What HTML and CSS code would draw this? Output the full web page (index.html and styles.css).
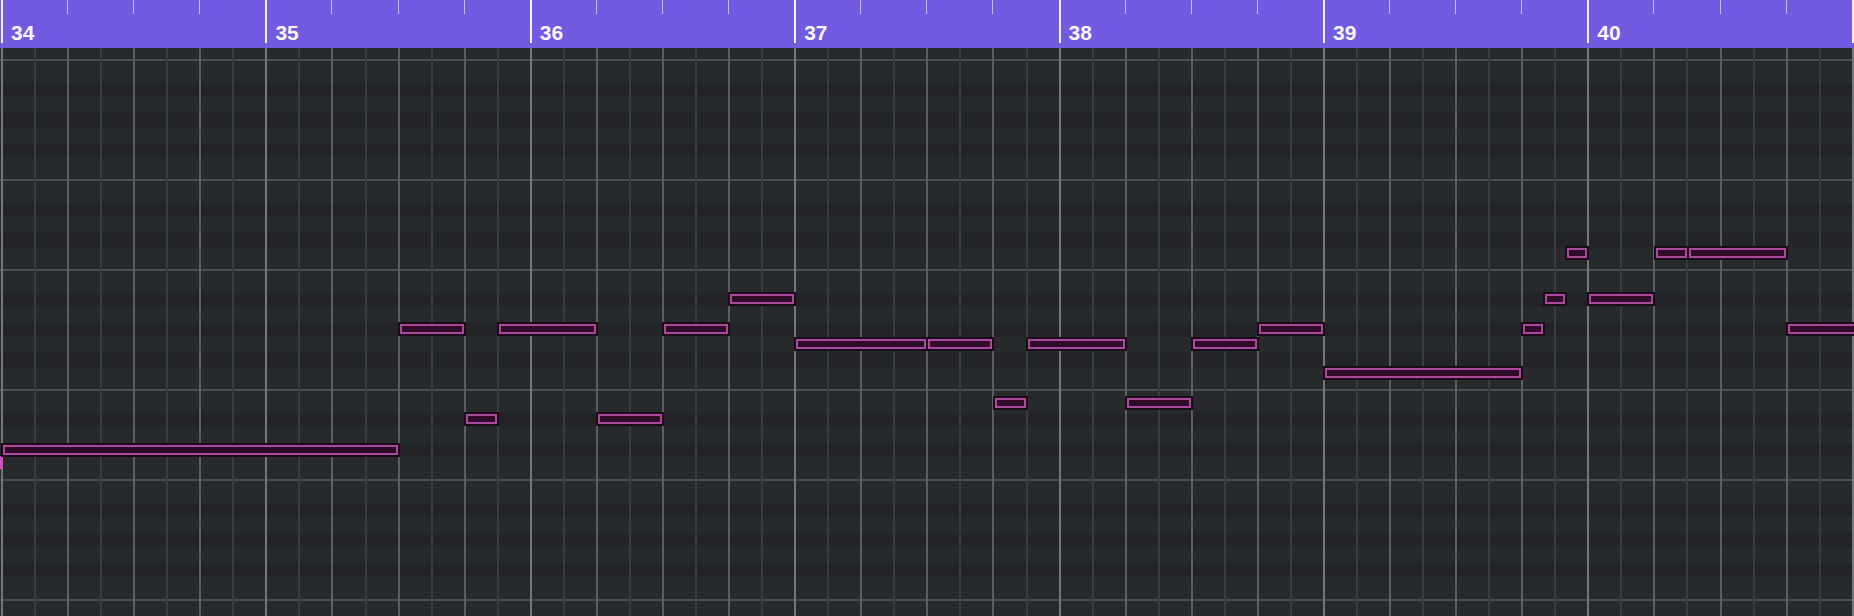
FILE: index.html
```html
<!DOCTYPE html>
<html lang="en">
<head>
  <meta charset="UTF-8" />
  <title>Piano Roll</title>
  <link rel="stylesheet" href="styles.css">
</head>
<body>

<div class="editor">
  <div class="ruler">
    <div class="bar"><div class="ticks"><i></i><i></i><i></i><i></i></div><span class="num">34</span></div>
    <div class="bar"><div class="ticks"><i></i><i></i><i></i><i></i></div><span class="num">35</span></div>
    <div class="bar"><div class="ticks"><i></i><i></i><i></i><i></i></div><span class="num">36</span></div>
    <div class="bar"><div class="ticks"><i></i><i></i><i></i><i></i></div><span class="num">37</span></div>
    <div class="bar"><div class="ticks"><i></i><i></i><i></i><i></i></div><span class="num">38</span></div>
    <div class="bar"><div class="ticks"><i></i><i></i><i></i><i></i></div><span class="num">39</span></div>
    <div class="bar"><div class="ticks"><i></i><i></i><i></i><i></i></div><span class="num">40</span></div>
    <div class="bar"><div class="ticks"><i></i><i></i><i></i><i></i></div></div>
  </div>

  <div class="roll">
    <div class="lanes">
      <div class="col"><i></i><i></i><i></i><i></i><i></i><i></i><i></i><i></i></div>
      <div class="col"><i></i><i></i><i></i><i></i><i></i><i></i><i></i><i></i></div>
      <div class="col"><i></i><i></i><i></i><i></i><i></i><i></i><i></i><i></i></div>
      <div class="col"><i></i><i></i><i></i><i></i><i></i><i></i><i></i><i></i></div>
      <div class="col"><i></i><i></i><i></i><i></i><i></i><i></i><i></i><i></i></div>
      <div class="col"><i></i><i></i><i></i><i></i><i></i><i></i><i></i><i></i></div>
      <div class="col"><i></i><i></i><i></i><i></i><i></i><i></i><i></i><i></i></div>
      <div class="col"><i></i><i></i><i></i><i></i><i></i><i></i><i></i><i></i></div>
    </div>

    <div class="notes">
      <div class="cue"></div>
      <!-- --s = start in eighths, --l = length in eighths, --y = row top -->
      <div class="note" style="--s:0;--l:12;--y:443"></div>
      <div class="note" style="--s:12;--l:2;--y:322"></div>
      <div class="note" style="--s:14;--l:1;--y:412"></div>
      <div class="note" style="--s:15;--l:3;--y:322"></div>
      <div class="note" style="--s:18;--l:2;--y:412"></div>
      <div class="note" style="--s:20;--l:2;--y:322"></div>
      <div class="note" style="--s:22;--l:2;--y:292"></div>
      <div class="note" style="--s:24;--l:4;--y:337"></div>
      <div class="note" style="--s:28;--l:2;--y:337"></div>
      <div class="note" style="--s:30;--l:1;--y:396"></div>
      <div class="note" style="--s:31;--l:3;--y:337"></div>
      <div class="note" style="--s:34;--l:2;--y:396"></div>
      <div class="note" style="--s:36;--l:2;--y:337"></div>
      <div class="note" style="--s:38;--l:2;--y:322"></div>
      <div class="note" style="--s:40;--l:6;--y:366"></div>
      <div class="note" style="--s:46;--l:0.6667;--y:322"></div>
      <div class="note" style="--s:46.6667;--l:0.6667;--y:292"></div>
      <div class="note" style="--s:47.3333;--l:0.6667;--y:246"></div>
      <div class="note" style="--s:48;--l:2;--y:292"></div>
      <div class="note" style="--s:50;--l:1;--y:246"></div>
      <div class="note" style="--s:51;--l:3;--y:246"></div>
      <div class="note" style="--s:54;--l:2.5;--y:322"></div>
    </div>
  </div>
</div>

</body>
</html>
```

FILE: styles.css
```css
body {
  margin: 0;
  padding: 0;
  overflow: hidden;
  background: #272a2d;
  font-family: "Liberation Sans", Arial, sans-serif;
}

.editor {
  width: 1854px;
  height: 616px;
  overflow: hidden;
}

/* ruler */

.ruler {
  display: grid;
  grid-template-columns: repeat(8, 264.4px);
  height: 48px;
  padding-left: 1px;
  background: #725ae1;
}

.bar {
  height: 43px;
  box-sizing: border-box;
  border-left: 2px solid #f4f2ff;
}

.ticks {
  display: flex;
  height: 14px;
  margin-left: -2px;
}

.ticks i {
  flex: 1;
  border-left: 1px solid rgba(255, 255, 255, 0.6);
}

.ticks i:first-child {
  border-left-color: transparent;
}

.num {
  display: block;
  margin: 8px 0 0 8px;
  font-size: 21px;
  line-height: 21px;
  font-weight: bold;
  color: #f7f5ff;
}

/* note grid */

.roll {
  position: relative;
  height: 568px;
  padding-left: 1px;
  background-image: linear-gradient(to bottom,
    #4a4c4f 0 2px,
    #272a2d 2px 24px,
    #222427 24px 38px,
    #272a2d 38px 54px,
    #222427 54px 68px,
    #272a2d 68px 84px,
    #222427 84px 98px,
    #272a2d 98px 120px,
    #4a4c4f 120px 122px,
    #272a2d 122px 144px,
    #222427 144px 158px,
    #272a2d 158px 174px,
    #222427 174px 188px,
    #272a2d 188px 210px);
  background-size: 100% 210px;
  background-position: 0 11px;
  background-repeat: repeat-y;
}

.lanes {
  display: grid;
  grid-template-columns: repeat(8, 264.4px);
  height: 100%;
}

.col {
  display: flex;
}

.col i {
  flex: 1;
  border-left: 2px solid #393c3f;
}

.col i:nth-child(odd) {
  border-left-color: #5c5e62;
}

.col i:first-child {
  border-left-color: #75777a;
}

.notes {
  position: absolute;
  top: 0;
  left: 0;
  right: 0;
  bottom: 0;
}

.note {
  position: absolute;
  left: calc(1px + var(--s) * 33.05px);
  width: calc(var(--l) * 33.05px + 2px);
  top: calc(var(--y) * 1px - 48px);
  height: 14px;
  box-sizing: border-box;
  border: 2px solid #1c0b18;
  background: #2f0a29;
  box-shadow: inset 0 0 0 2px #a94a9c;
}

.cue {
  position: absolute;
  left: 0;
  top: 408px;
  width: 3px;
  height: 13px;
  background: #d94bc0;
}
```
